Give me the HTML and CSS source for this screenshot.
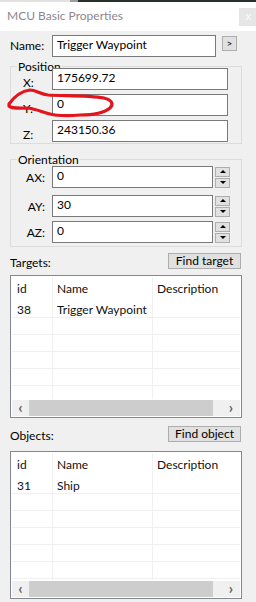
FILE: index.html
```html
<!DOCTYPE html>
<html>
<head>
<meta charset="utf-8">
<link rel="stylesheet" href="styles.css">
</head>
<body>
<div class="strip"><span class="s1"></span><span class="s2"></span><span class="s3"></span></div>
<header class="titlebar">
  <span class="title">MCU Basic Properties</span>
  <span class="close">x</span>
</header>
<main class="panel">
  <div class="name-row">
    <span class="name-label">Name:</span>
    <div class="input name-input">Trigger Waypoint</div>
    <div class="small-btn">&gt;</div>
  </div>

  <section class="group pos-group">
    <div class="legend"><span>Position</span></div>
    <div class="pos-row"><span class="pos-label">X:</span><div class="input pos-input">175699.72</div></div>
    <div class="pos-row"><span class="pos-label">Y:</span><div class="input pos-input">0</div></div>
    <div class="pos-row"><span class="pos-label">Z:</span><div class="input pos-input">243150.36</div></div>
  </section>

  <section class="group ori-group">
    <div class="legend"><span>Orientation</span></div>
    <div class="ori-row"><span class="ori-label">AX:</span><div class="input ori-input">0</div><div class="spin"><span class="spin-btn"><i class="up"></i></span><span class="spin-btn"><i class="down"></i></span></div></div>
    <div class="ori-row"><span class="ori-label">AY:</span><div class="input ori-input">30</div><div class="spin"><span class="spin-btn"><i class="up"></i></span><span class="spin-btn"><i class="down"></i></span></div></div>
    <div class="ori-row"><span class="ori-label">AZ:</span><div class="input ori-input">0</div><div class="spin"><span class="spin-btn"><i class="up"></i></span><span class="spin-btn"><i class="down"></i></span></div></div>
  </section>

  <div class="list-head targets-head">
    <span class="list-label">Targets:</span>
    <div class="btn">Find target</div>
  </div>
  <div class="listview targets">
    <div class="lv-row lv-header"><span>id</span><span>Name</span><span>Description</span></div>
    <div class="lv-body">
      <div class="lv-row"><span>38</span><span>Trigger Waypoint</span><span></span></div>
      <div class="lv-row"><span></span><span></span><span></span></div>
      <div class="lv-row"><span></span><span></span><span></span></div>
      <div class="lv-row"><span></span><span></span><span></span></div>
      <div class="lv-row"><span></span><span></span><span></span></div>
      <div class="lv-row"><span></span><span></span><span></span></div>
    </div>
    <div class="hscroll"><span class="arr">&lsaquo;</span><span class="thumb"></span><span class="arr">&rsaquo;</span></div>
  </div>

  <div class="list-head objects-head">
    <span class="list-label">Objects:</span>
    <div class="btn">Find object</div>
  </div>
  <div class="listview objects">
    <div class="lv-row lv-header"><span>id</span><span>Name</span><span>Description</span></div>
    <div class="lv-body">
      <div class="lv-row"><span>31</span><span>Ship</span><span></span></div>
      <div class="lv-row"><span></span><span></span><span></span></div>
      <div class="lv-row"><span></span><span></span><span></span></div>
      <div class="lv-row"><span></span><span></span><span></span></div>
      <div class="lv-row"><span></span><span></span><span></span></div>
      <div class="lv-row"><span></span><span></span><span></span></div>
      <div class="lv-row"><span></span><span></span><span></span></div>
    </div>
    <div class="hscroll"><span class="arr">&lsaquo;</span><span class="thumb"></span><span class="arr">&rsaquo;</span></div>
  </div>
</main>
<svg class="scribble" width="124" height="40" viewBox="0 0 124 40">
  <path d="M9 19 C 14 12, 22 6, 30 5 C 36 5, 40 9, 48 10 C 62 11, 88 10, 104 13 C 112 15, 114 19, 110 23 C 104 28, 92 30, 80 30 C 68 31, 58 31, 50 29 C 42 27, 36 24, 28 23 C 20 23, 12 24, 9 21 Z" fill="none" stroke="#e3141c" stroke-width="3.2" stroke-linejoin="round" stroke-linecap="round"/>
</svg>
</body>
</html>
```
FILE: styles.css
```css
* { box-sizing: border-box; }
html, body { margin: 0; padding: 0; }
body {
  width: 256px;
  height: 602px;
  overflow: hidden;
  background: #f0f0f0;
  font-family: Lato, "Noto Sans", sans-serif;
  font-size: 12px;
  color: #000;
}
.strip { display: flex; height: 2px; }
.strip .s1 { width: 70px; background: #e2e2e2; }
.strip .s2 { width: 8px; background: #9c9c9c; }
.strip .s3 { flex: 1; background: #26302a; }

.titlebar {
  height: 29px;
  background: #fff;
  display: flex;
  align-items: flex-start;
  justify-content: space-between;
}
.title {
  margin-top: 6px;
  margin-left: 7px;
  font-size: 12px;
  line-height: 16px;
  color: #8e868e;
}
.close {
  margin-top: 6px;
  width: 17px;
  height: 18px;
  background: #e6e6e6;
  color: #fbfbfb;
  font-size: 11px;
  line-height: 16px;
  text-align: center;
  padding-left: 2px;
}

.panel { padding-top: 4px; }

.input {
  height: 22px;
  background: #fff;
  border: 1px solid #7a7a7a;
  line-height: 18px;
  padding-left: 4px;
  white-space: nowrap;
  overflow: hidden;
}

.name-row { display: flex; align-items: flex-start; padding-left: 10px; height: 22px; }
.name-label { width: 42px; line-height: 16px; margin-top: 3px; }
.name-input { width: 164px; }
.small-btn {
  margin-left: 6px;
  margin-top: 1px;
  width: 15px;
  height: 15px;
  border: 1px solid #adadad;
  background: #e1e1e1;
  font-size: 10px;
  line-height: 12px;
  text-align: center;
}

.group {
  margin-left: 10px;
  width: 232px;
  border: 1px solid #dcdcdc;
}
.legend { display: flex; height: 0; padding-left: 6px; }
.legend span {
  margin-top: -8px;
  height: 14px;
  padding: 0 1px;
  line-height: 14px;
  background: linear-gradient(#f0f0f0, #f0f0f0) 0 5px / 100% 4px no-repeat;
}
.pos-group { margin-top: 9px; padding: 1px 0 1px 0; }
.pos-row { display: flex; align-items: flex-end; }
.pos-row + .pos-row { margin-top: 4px; }
.pos-label { width: 41px; padding-left: 12px; line-height: 14px; padding-bottom: 0; }
.pos-input { width: 176px; }

.ori-group { margin-top: 15px; padding: 1px 0 3px 0; }
.ori-row { display: flex; align-items: center; }
.legend + .ori-row { margin-top: 5px; }
.ori-row + .ori-row { margin-top: 4px; }
.ori-row:nth-child(3) { margin-top: 7px; }
.ori-label { width: 41px; text-align: right; padding-right: 7px; }
.ori-input { width: 161px; }
.spin { display: flex; flex-direction: column; gap: 1px; margin-left: 2px; }
.spin-btn {
  width: 15px;
  height: 10px;
  border: 1px solid #adadad;
  background: #e1e1e1;
  display: flex;
  align-items: center;
  justify-content: center;
}
.spin-btn i { width: 0; height: 0; border-left: 3px solid transparent; border-right: 3px solid transparent; }
.spin-btn i.up { border-bottom: 3px solid #000; }
.spin-btn i.down { border-top: 3px solid #000; }

.list-head {
  display: flex;
  justify-content: space-between;
  align-items: flex-end;
  padding: 0 15px 0 10px;
  height: 16px;
}
.targets-head { margin-top: 6px; }
.objects-head { margin-top: 8px; }
.list-label { line-height: 14px; margin-bottom: -1px; }
.btn {
  width: 73px;
  height: 16px;
  border: 1px solid #adadad;
  background: #e1e1e1;
  text-align: center;
  line-height: 14px;
}

.listview {
  margin-left: 10px;
  width: 232px;
  border: 1px solid #828790;
  background: #fff;
  padding: 1px;
  display: flex;
  flex-direction: column;
}
.targets { margin-top: 6px; height: 143px; }
.objects { margin-top: 9px; height: 148px; }
.lv-row {
  display: grid;
  grid-template-columns: 41px 100px 1fr;
  height: 17px;
  border-bottom: 1px solid #f0f0f0;
  color: #111;
}
.lv-row span { border-right: 1px solid #f0f0f0; padding-left: 4px; line-height: 17px; white-space: nowrap; overflow: hidden; }
.lv-row span:first-child { padding-left: 5px; }
.lv-row span:last-child { border-right: none; }
.lv-header { height: 24px; border-bottom: none; }
.lv-header span { line-height: 24px; }
.lv-body { flex: 1; overflow: hidden; }
.hscroll {
  margin-top: 1px;
  height: 16px;
  flex: none;
  display: flex;
  background: #f0f0f0;
}
.hscroll .arr {
  width: 17px;
  text-align: center;
  font-size: 15px;
  line-height: 14px;
  color: #606060;
  font-weight: bold;
}
.hscroll .thumb { flex: 1; background: #cdcdcd; margin-right: 9px; }
.hscroll .arr:last-child { width: 18px; }

.scribble { position: absolute; left: 0; top: 85px; }
```
